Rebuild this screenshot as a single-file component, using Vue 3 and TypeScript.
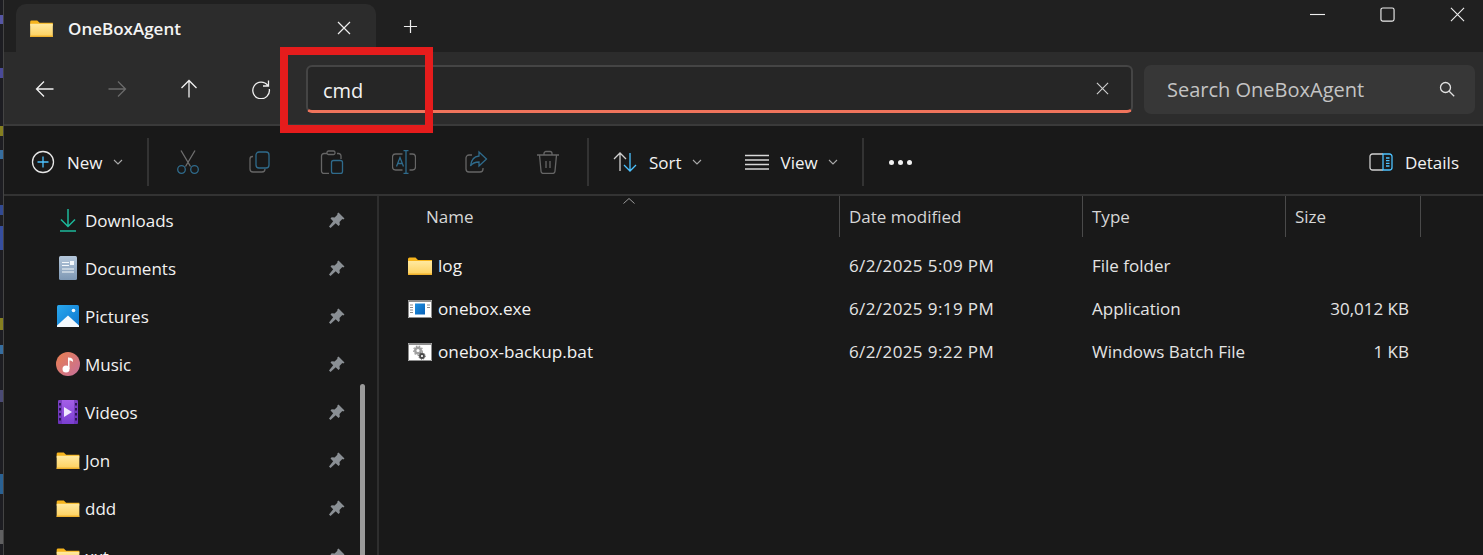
<script setup lang="ts">
interface NavItem {
  name: string
  icon: string
}

interface FileItem {
  name: string
  icon: string
  modified: string
  type: string
  size: string
}

const quickAccess: NavItem[] = [
  { name: 'Downloads', icon: 'downloads' },
  { name: 'Documents', icon: 'documents' },
  { name: 'Pictures', icon: 'pictures' },
  { name: 'Music', icon: 'music' },
  { name: 'Videos', icon: 'videos' },
  { name: 'Jon', icon: 'folder' },
  { name: 'ddd', icon: 'folder' },
  { name: 'xxt', icon: 'folder' }
]

const files: FileItem[] = [
  { name: 'log', icon: 'folder', modified: '6/2/2025 5:09 PM', type: 'File folder', size: '' },
  { name: 'onebox.exe', icon: 'exe', modified: '6/2/2025 9:19 PM', type: 'Application', size: '30,012 KB' },
  { name: 'onebox-backup.bat', icon: 'bat', modified: '6/2/2025 9:22 PM', type: 'Windows Batch File', size: '1 KB' }
]

// bits of the desktop showing behind the window's left edge
const desktopBits = [
  { top: 15, height: 9, color: '#6a6ad0' },
  { top: 68, height: 10, color: '#5a5ac0' },
  { top: 126, height: 10, color: '#a8a020' },
  { top: 150, height: 9, color: '#3f88c8' },
  { top: 205, height: 10, color: '#3a5ab8' },
  { top: 226, height: 24, color: '#3f5fc8' },
  { top: 318, height: 12, color: '#a8a020' },
  { top: 345, height: 9, color: '#3f88c8' },
  { top: 390, height: 12, color: '#5a5a90' },
  { top: 474, height: 20, color: '#2f78b8' },
  { top: 530, height: 14, color: '#777' }
]
</script>

<template>
  <div class="window">
    <div class="edge">
      <i v-for="bit in desktopBits" :key="bit.top" :style="{ top: bit.top + 'px', height: bit.height + 'px', background: bit.color }"></i>
    </div>
    <div class="shell">
      <!-- Tab strip -->
      <div class="titlebar">
        <div class="tab">
          <svg class="tab-folder" viewBox="0 0 24 18">
            <path d="M0 2a1.500 1.500 0 0 1 1.500-1.500h6L10 3h14v3H0z" fill="#f6b41c" />
            <path d="M0 4h24v14H0z" fill="url(#folderFill)" />
            <path d="M0 16.500h24V18H0z" fill="#eeb02c" />
          </svg>
          <span class="tab-title">OneBoxAgent</span>
          <svg class="tab-close" viewBox="0 0 14 14"><path d="M1 1l12 12M13 1L1 13" /></svg>
        </div>
        <svg class="tab-new" viewBox="0 0 16 16"><path d="M8 1v14M1 8h14" /></svg>
        <div class="caption">
          <svg viewBox="0 0 16 16"><path d="M0 8h16" /></svg>
          <svg viewBox="0 0 16 16"><rect x="1" y="1" width="14" height="14" rx="2" /></svg>
          <svg viewBox="0 0 16 16"><path d="M1 1l14 14M15 1L1 15" /></svg>
        </div>
      </div>

      <!-- Address row -->
      <div class="addressbar">
        <button class="nav-btn">
          <svg viewBox="0 0 20 20"><path d="M1.500 10h17M9 2.500L1.500 10 9 17.500" /></svg>
        </button>
        <button class="nav-btn off">
          <svg viewBox="0 0 20 20"><path d="M1.500 10h17M11 2.500l7.500 7.500-7.500 7.500" /></svg>
        </button>
        <button class="nav-btn">
          <svg viewBox="0 0 20 20"><path d="M10 18.500v-17M2.500 9L10 1.500 17.500 9" /></svg>
        </button>
        <button class="nav-btn">
          <svg viewBox="0 0 20 20"><path d="M16.800 6.500A8.300 8.300 0 1 0 18.300 10M17.500 1.500v5.500H12" /></svg>
        </button>
        <div class="address">
          <span class="address-text">cmd</span>
          <svg class="address-clear" viewBox="0 0 14 14"><path d="M1 1l12 12M13 1L1 13" /></svg>
        </div>
        <div class="search">
          <span>Search OneBoxAgent</span>
          <svg viewBox="0 0 16 16"><circle cx="6.500" cy="6.500" r="5" /><path d="M10.200 10.200l5 5" /></svg>
        </div>
      </div>

      <!-- Command bar -->
      <div class="toolbar">
        <div class="tool tool-new">
          <svg class="ico" viewBox="0 0 24 24">
            <circle cx="12" cy="12" r="10.500" stroke="#e6e6e6" />
            <path d="M12 6.500v11M6.500 12h11" stroke="#4cc2ff" />
          </svg>
          <span>New</span>
          <svg class="chev" viewBox="0 0 10 6"><path d="M1 1l4 4 4-4" /></svg>
        </div>
        <i class="sep"></i>
        <div class="icon-tool">
          <svg class="ico" viewBox="0 0 24 24">
            <path d="M5 .5l9.500 16M19 .5L9.500 16.500" stroke="#6f6f6f" />
            <circle cx="5.500" cy="19.500" r="3.800" stroke="#2f6b8c" />
            <circle cx="18.500" cy="19.500" r="3.800" stroke="#2f6b8c" />
          </svg>
        </div>
        <div class="icon-tool">
          <svg class="ico" viewBox="0 0 24 24">
            <path d="M5 6.500h-.5A2.500 2.500 0 0 0 2 9v10a3 3 0 0 0 3 3h9a3 3 0 0 0 3-3" stroke="#666" />
            <rect x="8" y="2" width="13" height="16" rx="3" stroke="#2f6b8c" />
          </svg>
        </div>
        <div class="icon-tool">
          <svg class="ico" viewBox="0 0 24 24">
            <path d="M7 3.500H4A2.500 2.500 0 0 0 1.500 6v15A2.500 2.500 0 0 0 4 23.500h5M17 3.500h1.500A2.500 2.500 0 0 1 21 6v3" stroke="#666" />
            <rect x="7" y="1" width="8" height="3.500" rx="1.500" stroke="#666" />
            <rect x="11.500" y="10.500" width="11" height="13" rx="2" stroke="#2f6b8c" />
          </svg>
        </div>
        <div class="icon-tool">
          <svg class="ico" viewBox="0 0 24 24">
            <path d="M11 4H4a3 3 0 0 0-3 3v10a3 3 0 0 0 3 3h7M18 4h3a3 3 0 0 1 3 3v10a3 3 0 0 1-3 3h-3" stroke="#666" transform="translate(-0.500 0)" />
            <path d="M11.500 .7h5M14 .7v22.600M11.500 23.300h5" stroke="#2f6b8c" />
            <path d="M4.500 16.500L8 7.500l3.500 9M5.800 13.500h4.400" stroke="#2f6b8c" />
          </svg>
        </div>
        <div class="icon-tool">
          <svg class="ico" viewBox="0 0 24 24">
            <path d="M8 5H5a3 3 0 0 0-3 3v11a3 3 0 0 0 3 3h11a3 3 0 0 0 3-3v-1" stroke="#666" />
            <path d="M15 2l7.500 7-7.500 7v-4c-4 0-6.500 1-8.500 4 .5-5 3-9.500 8.500-10z" stroke="#2f6b8c" />
          </svg>
        </div>
        <div class="icon-tool">
          <svg class="ico" viewBox="0 0 24 24">
            <path d="M1 5h22M8 5V3.500A2 2 0 0 1 10 1.500h4a2 2 0 0 1 2 2V5M3.500 5l1.500 16a2.500 2.500 0 0 0 2.500 2.500h9A2.500 2.500 0 0 0 19 21l1.500-16M10 11v7M14 11v7" stroke="#666" />
          </svg>
        </div>
        <i class="sep"></i>
        <div class="tool tool-sort">
          <svg class="ico" viewBox="0 0 24 24">
            <path d="M7 21V3M1 9l6-6 6 6" stroke="#cfcfcf" />
            <path d="M17 3v18M11 15l6 6 6-6" stroke="#4cc2ff" />
          </svg>
          <span>Sort</span>
          <svg class="chev" viewBox="0 0 10 6"><path d="M1 1l4 4 4-4" /></svg>
        </div>
        <div class="tool tool-view">
          <svg class="ico" viewBox="0 0 24 16">
            <path d="M0 1.500h24M0 6h24M0 10.500h24M0 15h24" stroke="#d8d8d8" stroke-width="1.300" />
          </svg>
          <span>View</span>
          <svg class="chev" viewBox="0 0 10 6"><path d="M1 1l4 4 4-4" /></svg>
        </div>
        <i class="sep"></i>
        <div class="dots"><b></b><b></b><b></b></div>
        <div class="tool tool-details">
          <svg class="ico" viewBox="0 0 24 18">
            <path d="M14 1H3.500A2.500 2.500 0 0 0 1 3.500v11A2.500 2.500 0 0 0 3.500 17H14" stroke="#cfcfcf" />
            <path d="M14 1h6.500A2.500 2.500 0 0 1 23 3.500v11a2.500 2.500 0 0 1-2.500 2.500H14zM17 5h3.500M17 7.700h3.500M17 10.400h3.500M17 13h3.500" stroke="#4cc2ff" />
          </svg>
          <span>Details</span>
        </div>
      </div>

      <div class="content">
        <!-- Navigation pane -->
        <aside class="sidebar">
          <div v-for="item in quickAccess" :key="item.name" class="side-row">
            <span class="side-icon">
              <svg v-if="item.icon === 'downloads'" viewBox="0 0 24 24" fill="none" stroke="#1cb89a" stroke-width="1.500">
                <path d="M12 1v17M5 11.500l7 7 7-7M4 23h16" />
              </svg>
              <svg v-else-if="item.icon === 'documents'" viewBox="0 0 24 24">
                <rect x="3" y="0" width="18" height="24" rx="1.500" fill="url(#docFill)" />
                <path d="M6 6.500h7M6 9.500h7M6 13h12M6 16h12" stroke="#f4f7fa" stroke-width="1.100" />
                <rect x="14" y="5" width="4" height="4" fill="#f4f7fa" />
              </svg>
              <svg v-else-if="item.icon === 'pictures'" viewBox="0 0 24 24">
                <rect x="1" y="1" width="22" height="22" rx="1.500" fill="url(#picFill)" />
                <path d="M1 21.500L12 11.500l11 10V23H1z" fill="#f4f9fd" />
                <circle cx="17.500" cy="6.500" r="1.800" fill="#f4f9fd" />
              </svg>
              <svg v-else-if="item.icon === 'music'" viewBox="0 0 24 24">
                <circle cx="12" cy="12" r="12" fill="url(#musicFill)" />
                <circle cx="10" cy="17" r="3.500" fill="#fff" />
                <path d="M12 17V5.500c2.500 0 5 .6 5 3.500v1c-1.200-1.200-3-1.400-3.500-1.400V17z" fill="#fff" />
              </svg>
              <svg v-else-if="item.icon === 'videos'" viewBox="0 0 24 24">
                <rect x="2" y="0" width="20" height="24" rx="1.500" fill="url(#videoFill)" />
                <path d="M2 0h4v24H2zM18 0h4v24h-4z" fill="#5e2aa8" opacity=".55" />
                <path d="M3 3h2v2.500H3zM3 8h2v2.500H3zM3 13h2v2.500H3zM3 18h2v2.500H3zM19 3h2v2.500h-2zM19 8h2v2.500h-2zM19 13h2v2.500h-2zM19 18h2v2.500h-2z" fill="#2b1555" />
                <path d="M8 7l8 5-8 5z" fill="#f0e8ff" />
              </svg>
              <svg v-else class="folder" viewBox="0 0 24 18">
                <path d="M0 2a1.500 1.500 0 0 1 1.500-1.500h6L10 3h14v3H0z" fill="#f6b41c" />
                <path d="M0 4h24v14H0z" fill="url(#folderFill)" />
                <path d="M0 16.500h24V18H0z" fill="#eeb02c" />
              </svg>
            </span>
            <span class="side-name">{{ item.name }}</span>
            <svg class="pin" viewBox="0 0 16 16" fill="#8a8f94">
              <path d="M9.500.5l6 6-1.200 1-1-.4-2.800 2.800.3 2.800-1.300 1.300-2.800-2.800L1.500 16 0 14.500l4.200-5.200-2.700-2.800 1.200-1.200 2.900.2L8.400 2.700 8.200 1.700z" />
            </svg>
          </div>
          <div class="scroll-thumb"></div>
        </aside>

        <!-- File list -->
        <main class="list">
          <div class="list-head">
            <div class="cell head-name">
              Name
              <svg class="sort-caret" viewBox="0 0 12 6"><path d="M.5 5.500L6 .5l5.500 5" /></svg>
            </div>
            <div class="cell">Date modified</div>
            <div class="cell">Type</div>
            <div class="cell">Size</div>
          </div>
          <div v-for="file in files" :key="file.name" class="file-row">
            <div class="file-name">
              <svg v-if="file.icon === 'folder'" class="file-icon folder" viewBox="0 0 24 18">
                <path d="M0 2a1.500 1.500 0 0 1 1.500-1.500h6L10 3h14v3H0z" fill="#f6b41c" />
                <path d="M0 4h24v14H0z" fill="url(#folderFill)" />
                <path d="M0 16.500h24V18H0z" fill="#eeb02c" />
              </svg>
              <svg v-else-if="file.icon === 'exe'" class="file-icon" viewBox="0 0 24 18">
                <rect width="24" height="18" fill="#fff" />
                <path d="M.5.500h23v17H.5z" fill="none" stroke="#8d8d8d" />
                <rect x="1" y="1" width="22" height="1" fill="#8d8d8d" />
                <rect x="7" y="3.500" width="10" height="11" fill="url(#exeFill)" />
                <path d="M2 5h3M2 7.500h3M2 10h3M2 12.500h3M19 5h3M19 7.500h3" stroke="#8a8a8a" />
              </svg>
              <svg v-else class="file-icon" viewBox="0 0 24 18">
                <rect width="24" height="18" fill="#fff" />
                <path d="M.5.500h23v17H.5z" fill="none" stroke="#8d8d8d" />
                <rect x="1" y="1" width="22" height="1" fill="#8d8d8d" />
                <circle cx="10" cy="7.500" r="2.800" fill="none" stroke="#a0a0a0" stroke-width="2.400" />
                <circle cx="10" cy="7.500" r="4.400" fill="none" stroke="#a0a0a0" stroke-width="1.300" stroke-dasharray="1.500 1.500" />
                <circle cx="14" cy="13" r="2" fill="none" stroke="#4a4a4a" stroke-width="1.800" />
                <circle cx="14" cy="13" r="3.200" fill="none" stroke="#4a4a4a" stroke-width="1" stroke-dasharray="1.200 1.200" />
              </svg>
              <span>{{ file.name }}</span>
            </div>
            <div class="file-cell file-date">{{ file.modified }}</div>
            <div class="file-cell">{{ file.type }}</div>
            <div class="file-cell file-size">{{ file.size }}</div>
          </div>
        </main>
      </div>
    </div>

    <!-- Annotation drawn on the screenshot -->
    <div class="callout"></div>

    <svg class="defs" width="0" height="0">
      <defs>
        <linearGradient id="folderFill" x1="0" y1="0" x2="0" y2="1">
          <stop offset="0" stop-color="#ffe9a0" />
          <stop offset="1" stop-color="#fdd05c" />
        </linearGradient>
        <linearGradient id="docFill" x1="0" y1="0" x2="0" y2="1">
          <stop offset="0" stop-color="#b4c6da" />
          <stop offset="1" stop-color="#7e98b4" />
        </linearGradient>
        <linearGradient id="picFill" x1="0" y1="0" x2="1" y2="1">
          <stop offset="0" stop-color="#2aa8ee" />
          <stop offset="1" stop-color="#0c76cf" />
        </linearGradient>
        <linearGradient id="musicFill" x1="0" y1="0" x2="1" y2="1">
          <stop offset="0" stop-color="#ea7f4e" />
          <stop offset="1" stop-color="#c56f9c" />
        </linearGradient>
        <linearGradient id="videoFill" x1="0" y1="0" x2="0" y2="1">
          <stop offset="0" stop-color="#a45fe8" />
          <stop offset="1" stop-color="#7a3fd0" />
        </linearGradient>
        <linearGradient id="exeFill" x1="0" y1="0" x2="1" y2="1">
          <stop offset="0" stop-color="#1e90e0" />
          <stop offset="1" stop-color="#0a62b8" />
        </linearGradient>
      </defs>
    </svg>
  </div>
</template>

<style>
html,
body {
  margin: 0;
  background: #191919;
  overflow: hidden;
}
</style>

<style scoped>
.window {
  position: relative;
  display: flex;
  width: 1483px;
  height: 555px;
  overflow: hidden;
  font-family: "Open Sans", "Noto Sans", sans-serif;
  font-size: 17px;
  color: #f2f2f2;
  background: #191919;
}

.edge {
  position: relative;
  flex: 0 0 4px;
  box-sizing: border-box;
  background: #1d1d22;
  border-right: 1px solid #444;
}

.edge i {
  position: absolute;
  left: 0;
  width: 3px;
  opacity: .75;
}

.shell {
  flex: 1;
  display: flex;
  flex-direction: column;
  min-width: 0;
}

.titlebar {
  display: flex;
  align-items: center;
  height: 52px;
  flex: none;
  padding-left: 12px;
  background: #202020;
}

.tab {
  display: flex;
  align-items: center;
  align-self: flex-end;
  box-sizing: border-box;
  width: 360px;
  height: 48px;
  padding: 0 25px 0 14px;
  background: #2c2c2c;
  border-radius: 10px 10px 0 0;
}

.tab-folder {
  width: 23px;
  height: 17px;
  margin-right: 15px;
}

.tab-title {
  flex: 1;
  font-weight: 600;
  color: #f4f4f4;
}

.tab-close {
  width: 14px;
  height: 14px;
  fill: none;
  stroke: #eee;
  stroke-width: 1.200;
}

.tab-new {
  width: 15px;
  height: 15px;
  margin-left: 27px;
  fill: none;
  stroke: #eee;
  stroke-width: 1.300;
}

.caption {
  margin-left: auto;
  display: flex;
  gap: 55px;
  padding: 0 18px 24px 0;
}

.caption svg {
  width: 15px;
  height: 15px;
  fill: none;
  stroke: #eee;
  stroke-width: 1.200;
}

.addressbar {
  display: flex;
  align-items: center;
  box-sizing: border-box;
  height: 74px;
  flex: none;
  padding: 2px 8px 0 5px;
  background: #2c2c2c;
  border-bottom: 2px solid #3a3a3a;
}

.nav-btn {
  flex: 0 0 72px;
  display: flex;
  justify-content: center;
  padding: 0;
  border: 0;
  background: none;
}

.nav-btn svg {
  width: 20px;
  height: 20px;
  fill: none;
  stroke: #f0f0f0;
  stroke-width: 1.300;
}

.nav-btn.off svg {
  stroke: #6a6a6a;
}

.address {
  flex: 0 0 827px;
  display: flex;
  align-items: center;
  box-sizing: border-box;
  height: 48px;
  margin-left: 9px;
  padding: 3px 22px 0 15px;
  background: #262626;
  border: 2px solid #454545;
  border-bottom: 3px solid #f0745c;
  border-radius: 6px;
  font-size: 20px;
}

.address-text {
  flex: 1;
}

.address-clear {
  width: 13px;
  height: 13px;
  margin-top: -3px;
  fill: none;
  stroke: #cfcfcf;
  stroke-width: 1.200;
}

.search {
  flex: 0 0 331px;
  display: flex;
  align-items: center;
  justify-content: space-between;
  box-sizing: border-box;
  height: 49px;
  margin-left: 11px;
  padding: 0 20px 0 23px;
  background: #373737;
  border-radius: 7px;
  font-size: 20px;
  color: #c4c4c4;
}

.search svg {
  width: 16px;
  height: 16px;
  fill: none;
  stroke: #e2e2e2;
  stroke-width: 1.300;
}

.toolbar {
  display: flex;
  align-items: center;
  box-sizing: border-box;
  height: 70px;
  flex: none;
  padding-top: 4px;
  background: #191919;
  border-bottom: 2px solid #333;
}

.ico {
  flex: none;
  width: 24px;
  height: 24px;
  fill: none;
  stroke-width: 1.300;
}

.tool {
  display: flex;
  align-items: center;
}

.tool-new {
  width: 143px;
  padding-left: 27px;
  box-sizing: border-box;
}

.tool-new .ico {
  margin-right: 12px;
}

.chev {
  width: 10px;
  height: 6px;
  margin-left: 10px;
  fill: none;
  stroke: #aaa;
  stroke-width: 1.100;
}

.sep {
  flex: none;
  width: 2px;
  height: 48px;
  margin-right: 3px;
  background: #333;
}

.icon-tool + .sep {
  margin-left: 3px;
}

.icon-tool {
  flex: 0 0 72px;
  display: flex;
  justify-content: center;
}

.tool-sort {
  margin-left: 21px;
}

.tool-sort .ico {
  margin-right: 12px;
}

.tool-view {
  margin: 0 24px 0 43px;
}

.tool-view .ico {
  height: 16px;
  margin-right: 12px;
}

.dots {
  display: flex;
  gap: 4px;
  margin-left: 22px;
}

.dots b {
  width: 5px;
  height: 5px;
  border-radius: 50%;
  background: #f2f2f2;
}

.tool-details {
  margin-left: auto;
  padding-right: 24px;
}

.tool-details .ico {
  height: 18px;
  margin-right: 12px;
}

.content {
  flex: 1;
  display: flex;
  min-height: 0;
}

.sidebar {
  position: relative;
  flex: 0 0 375px;
  box-sizing: border-box;
  border-right: 2px solid #2e2e2e;
}

.side-row {
  display: flex;
  align-items: center;
  height: 48px;
  padding-left: 52px;
}

.side-icon {
  flex: 0 0 29px;
  display: flex;
}

.side-icon svg {
  width: 24px;
  height: 24px;
}

.side-icon svg.folder {
  height: 17px;
}

.side-name {
  flex: 1;
}

.pin {
  width: 16px;
  height: 16px;
  margin-right: 32px;
}

.scroll-thumb {
  position: absolute;
  top: 188px;
  bottom: 0;
  left: 356px;
  width: 5px;
  border-radius: 3px 3px 0 0;
  background: #9a9a9a;
}

.list {
  flex: 1;
}

.list-head,
.file-row {
  display: grid;
  grid-template-columns: 459px 243px 203px 135px;
  margin-left: 2px;
}

.list-head {
  height: 41px;
}

.cell {
  box-sizing: border-box;
  padding: 9px 0 0 9px;
  font-size: 17px;
  color: #d6d6d6;
  border-right: 1px solid #4a4a4a;
}

.head-name {
  position: relative;
  padding-left: 45px;
}

.sort-caret {
  position: absolute;
  top: 2px;
  left: 242px;
  width: 12px;
  height: 6px;
  fill: none;
  stroke: #9a9a9a;
}

.file-row {
  align-items: center;
  height: 43px;
}

.list-head + .file-row {
  margin-top: 7px;
}

.file-name {
  display: flex;
  align-items: center;
  padding-left: 27px;
  font-size: 17.200px;
}

.file-icon {
  flex: none;
  width: 24px;
  height: 18px;
  margin-right: 6px;
}

.file-cell {
  padding-left: 9px;
  color: #e4e4e4;
}

.file-date {
  letter-spacing: .4px;
}

.file-size {
  padding-right: 12px;
  text-align: right;
}

.callout {
  position: absolute;
  top: 47px;
  left: 280px;
  box-sizing: border-box;
  width: 153px;
  height: 86px;
  border: 8px solid #e51c1c;
  pointer-events: none;
}

.defs {
  position: absolute;
}
</style>
